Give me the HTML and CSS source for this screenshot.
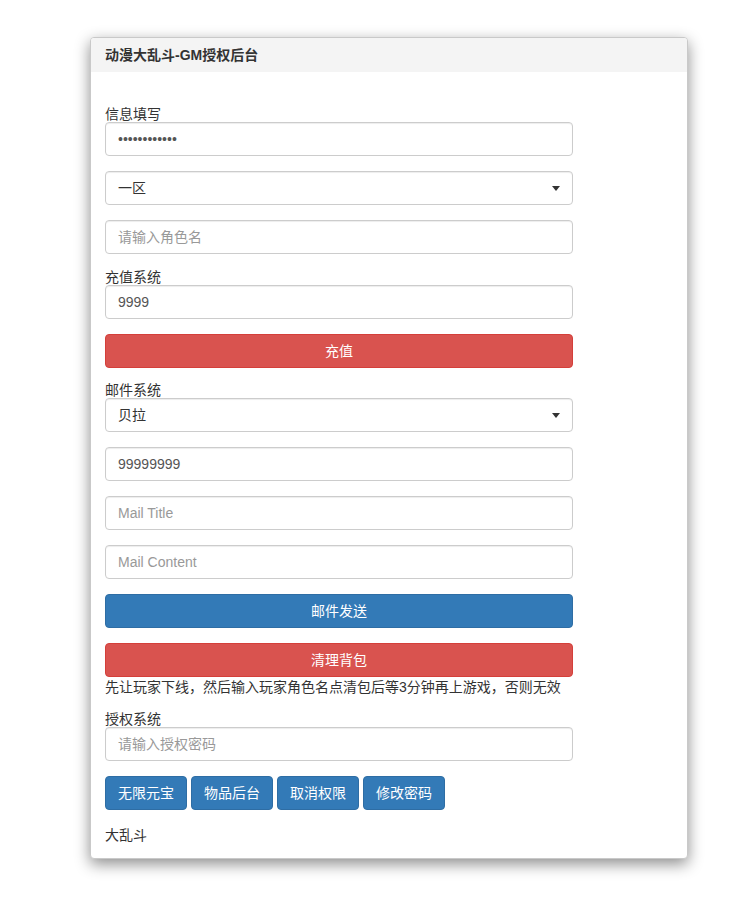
FILE: index.html
```html
<!DOCTYPE html>
<html lang="zh-CN">
<head>
<meta charset="utf-8">
<title>动漫大乱斗-GM授权后台</title>
<link rel="stylesheet" href="styles.css">
</head>
<body>
<div class="page">
  <div class="panel">
    <div class="panel-heading">动漫大乱斗-GM授权后台</div>
    <div class="panel-body">
      <form class="gm-form">
        <label class="field-label first">信息填写</label>
        <input class="form-control group" type="password" value="123456789012">
        <div class="select-wrap group">
          <select class="form-control"><option>一区</option></select>
        </div>
        <input class="form-control group" type="text" placeholder="请输入角色名">

        <label class="field-label">充值系统</label>
        <input class="form-control group" type="text" value="9999">
        <button type="button" class="btn btn-danger btn-block group-tight">充值</button>

        <label class="field-label">邮件系统</label>
        <div class="select-wrap group">
          <select class="form-control"><option>贝拉</option></select>
        </div>
        <input class="form-control group" type="text" value="99999999">
        <input class="form-control group" type="text" placeholder="Mail Title">
        <input class="form-control group" type="text" placeholder="Mail Content">
        <button type="button" class="btn btn-primary btn-block group">邮件发送</button>
        <button type="button" class="btn btn-danger btn-block">清理背包</button>
        <p class="note">先让玩家下线，然后输入玩家角色名点清包后等3分钟再上游戏，否则无效</p>

        <label class="field-label auth">授权系统</label>
        <input class="form-control group" type="text" placeholder="请输入授权密码">
        <div class="btn-row">
          <button type="button" class="btn btn-primary">无限元宝</button>
          <button type="button" class="btn btn-primary">物品后台</button>
          <button type="button" class="btn btn-primary">取消权限</button>
          <button type="button" class="btn btn-primary">修改密码</button>
        </div>
        <p class="footer-text">大乱斗</p>
      </form>
    </div>
  </div>
</div>
</body>
</html>
```

FILE: styles.css
```css
* { box-sizing: border-box; }

html, body {
  margin: 0;
  padding: 0;
  background: #fff;
}

body {
  font-family: "Liberation Sans", "Noto Sans CJK SC", sans-serif;
  font-size: 14px;
  color: #333;
}

.page {
  padding: 37px 0 40px 90px;
}

.panel {
  width: 598px;
  background: #fff;
  border: 1px solid #c9c9c9;
  border-radius: 4px;
  box-shadow: 0 5px 15px rgba(0, 0, 0, 0.45);
  overflow: hidden;
}

.panel-heading {
  height: 34px;
  line-height: 34px;
  padding: 0 14px;
  background: #f4f4f4;
  font-weight: bold;
  font-size: 14px;
  color: #333;
}

.panel-body {
  padding: 15px 14px 13px;
}

.gm-form {
  width: 468px;
}

.field-label {
  display: block;
  font-size: 14px;
  line-height: 16px;
  height: 16px;
  color: #333;
}

.field-label.first { margin-top: 19px; }
.field-label.auth { margin-top: 14px; }

.group { margin-bottom: 15px; }
.group-tight { margin-bottom: 14px; }

.form-control {
  display: block;
  width: 100%;
  height: 34px;
  padding: 6px 12px;
  font-family: "Liberation Sans", "Noto Sans CJK SC", sans-serif;
  font-size: 14px;
  line-height: 20px;
  color: #555;
  background: #fff;
  border: 1px solid #ccc;
  border-radius: 4px;
  box-shadow: inset 0 1px 1px rgba(0, 0, 0, 0.075);
  outline: none;
}

.form-control::placeholder { color: #999; }

.select-wrap {
  position: relative;
}

.select-wrap select {
  appearance: none;
  -webkit-appearance: none;
  color: #333;
}

.select-wrap::after {
  content: "";
  position: absolute;
  right: 13px;
  top: 15px;
  border-left: 4px solid transparent;
  border-right: 4px solid transparent;
  border-top: 5px solid #333;
  pointer-events: none;
}

.btn {
  display: inline-block;
  height: 34px;
  padding: 6px 12px;
  font-family: "Liberation Sans", "Noto Sans CJK SC", sans-serif;
  font-size: 14px;
  line-height: 20px;
  color: #fff;
  border: 1px solid transparent;
  border-radius: 4px;
  cursor: pointer;
  white-space: nowrap;
}

.btn-block {
  display: block;
  width: 100%;
}

.btn-danger {
  background: #d9534f;
  border-color: #d43f3a;
}

.btn-primary {
  background: #337ab7;
  border-color: #2e6da4;
}

.note {
  margin: 0;
  line-height: 20px;
  white-space: nowrap;
}

.btn-row {
  display: flex;
  gap: 4px;
}

.footer-text {
  margin: 15px 0 0;
  line-height: 20px;
}
```
